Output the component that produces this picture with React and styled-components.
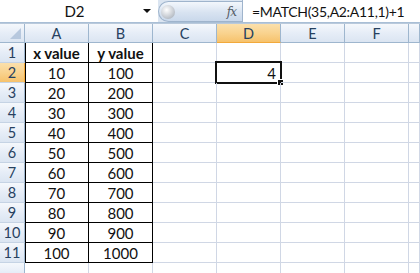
import React from 'react';
import styled, { createGlobalStyle, css } from 'styled-components';

const GlobalStyle = createGlobalStyle`
  html, body {
    margin: 0;
    padding: 0;
    background: #ffffff;
  }
  body {
    font-family: Lato, "Open Sans", sans-serif;
    overflow: hidden;
  }
`;

const COLS = ['A', 'B', 'C', 'D', 'E', 'F'];
const ROWS = [
  ['x value', 'y value'],
  [10, 100],
  [20, 200],
  [30, 300],
  [40, 400],
  [50, 500],
  [60, 600],
  [70, 700],
  [80, 800],
  [90, 900],
  [100, 1000],
];

const Sheet = styled.div`
  width: 420px;
  height: 273px;
  display: flex;
  flex-direction: column;
  background: #ffffff;
  overflow: hidden;
`;

const Toolbar = styled.div`
  display: flex;
  height: 23px;
  background: #dbe5f1;
  border-bottom: 1px solid #a9bfd6;
`;

const NameBox = styled.div`
  width: 158px;
  display: flex;
  align-items: center;
  background: #ffffff;
  font-size: 15px;
  color: #111;
`;

const NameText = styled.span`
  flex: 1;
  text-align: center;
  padding-left: 6px;
`;

const Arrow = styled.span`
  width: 0;
  height: 0;
  margin-right: 7px;
  border-left: 4px solid transparent;
  border-right: 4px solid transparent;
  border-top: 4px solid #111;
`;

const FxPill = styled.div`
  width: 84px;
  margin-top: 1px;
  height: 21px;
  display: flex;
  align-items: center;
  justify-content: space-between;
  padding: 0 6px 0 2px;
  box-sizing: border-box;
  border-radius: 11px 0 0 11px;
  border: 1px solid #9fb4cc;
  border-right: none;
  background: linear-gradient(#f3f7fc, #d8e3f1 55%, #c9d8eb);
`;

const Knob = styled.span`
  width: 14px;
  height: 14px;
  border-radius: 50%;
  background: radial-gradient(circle at 40% 35%, #ffffff, #c4c9d0 60%, #9aa3ad);
`;

const Fx = styled.span`
  font-family: "DejaVu Serif", "Liberation Serif", serif;
  font-style: italic;
  font-size: 12px;
  color: #555c66;
  letter-spacing: -1px;
`;

const Formula = styled.div`
  flex: 1;
  display: flex;
  align-items: center;
  padding-left: 9px;
  background: #ffffff;
  border-left: 1px solid #9fb4cc;
  font-size: 14px;
  letter-spacing: -0.3px;
  color: #111;
  white-space: nowrap;
`;

const Band = styled.div`
  height: 2px;
  background: #dfe8f4;
  border-bottom: 1px solid #b9c9db;
`;

const Grid = styled.div`
  display: grid;
  grid-template-columns: 25px repeat(6, 64px) 11px;
  grid-template-rows: 19px repeat(11, 20px) 20px;
`;

const headerBase = css`
  box-sizing: border-box;
  display: flex;
  align-items: center;
  justify-content: center;
  font-size: 14.5px;
  color: #27415f;
  border-right: 1px solid #9eb6ce;
  border-bottom: 1px solid #9eb6ce;
  background: ${({ $active }) =>
    $active
      ? 'linear-gradient(#fbe0ac, #f9d38f 50%, #f6c26c)'
      : 'linear-gradient(#f5f8fc, #e6edf7 50%, #dbe5f2)'};
`;

const Corner = styled.div`
  ${headerBase};
  position: relative;
  &::after {
    content: '';
    position: absolute;
    right: 3px;
    bottom: 3px;
    border-left: 11px solid transparent;
    border-bottom: 11px solid #b7c8de;
  }
`;

const ColHead = styled.div`
  ${headerBase};
  padding-top: 1px;
  ${({ $active }) => $active && 'border-bottom: 1px solid #f2a93b;'}
`;

const RowHead = styled.div`
  ${headerBase};
  border-bottom-color: #c5d3e4;
  ${({ $active }) => $active && 'border-right: 1px solid #f2a93b;'}
`;

const Cell = styled.div`
  position: relative;
  box-sizing: border-box;
  display: flex;
  align-items: center;
  justify-content: ${({ $align }) => ($align === 'right' ? 'flex-end' : 'center')};
  padding: 0 4px;
  font-size: 15px;
  font-weight: ${({ $bold }) => ($bold ? 700 : 400)};
  color: #111;
  border-right: 1px solid ${({ $edgeRight }) => ($edgeRight ? '#000' : '#d0d7e5')};
  border-bottom: 1px solid ${({ $edgeBottom }) => ($edgeBottom ? '#000' : '#d0d7e5')};
  ${({ $edgeLeft }) => $edgeLeft && 'box-shadow: inset 1px 0 0 #000;'}
`;

const Selection = styled.div`
  position: absolute;
  top: -2px;
  left: -2px;
  right: -2px;
  bottom: -2px;
  border: 2px solid #111;
  pointer-events: none;
  &::after {
    content: '';
    position: absolute;
    right: -4px;
    bottom: -4px;
    width: 5px;
    height: 5px;
    background: #111;
    border: 1px solid #fff;
  }
`;

const App = () => (
  <Sheet>
    <GlobalStyle />
    <Toolbar>
      <NameBox>
        <NameText>D2</NameText>
        <Arrow />
      </NameBox>
      <FxPill>
        <Knob />
        <Fx>fx</Fx>
      </FxPill>
      <Formula>=MATCH(35,A2:A11,1)+1</Formula>
    </Toolbar>
    <Band />
    <Grid>
      <Corner />
      {COLS.map((c) => (
        <ColHead key={c} $active={c === 'D'}>
          {c}
        </ColHead>
      ))}
      <ColHead />
      {[...ROWS, null].map((row, r) => (
        <React.Fragment key={r}>
          <RowHead $active={r === 1}>{row ? r + 1 : ''}</RowHead>
          {COLS.map((c, ci) => {
            const inTable = row && ci < 2;
            return (
              <Cell
                key={c}
                $bold={r === 0}
                $align={c === 'D' ? 'right' : 'center'}
                $edgeLeft={inTable && ci === 0}
                $edgeRight={inTable}
                $edgeBottom={inTable}
              >
                {inTable ? row[ci] : ''}
                {c === 'D' && r === 1 && (
                  <>
                    4
                    <Selection />
                  </>
                )}
              </Cell>
            );
          })}
          <Cell />
        </React.Fragment>
      ))}
    </Grid>
  </Sheet>
);

export default App;
